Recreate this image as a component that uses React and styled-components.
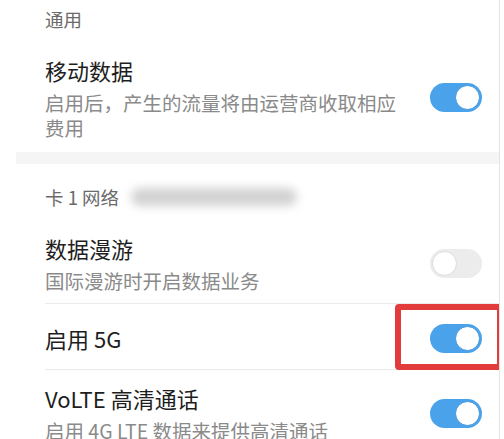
import React from "react";
import styled, { createGlobalStyle } from "styled-components";

const GlobalStyle = createGlobalStyle`
	body {
		margin: 0;
		background: #ffffff;
		font-family: "Noto Sans CJK SC", "Noto Sans", sans-serif;
		-webkit-font-smoothing: antialiased;
	}
`;

const SETTINGS = [
	{
		header: "通用",
		rows: [
			{
				title: "移动数据",
				desc: "启用后，产生的流量将由运营商收取相应费用",
				on: true,
			},
		],
	},
	{
		header: "卡 1 网络",
		blurred: true,
		rows: [
			{ title: "数据漫游", desc: "国际漫游时开启数据业务", on: false, divider: true },
			{ title: "启用 5G", on: true, divider: true, marked: true },
			{ title: "VoLTE 高清通话", desc: "启用 4G LTE 数据来提供高清通话", on: true },
		],
	},
];

const Toggle = ({ on }) => (
	<StyledTrack $on={on}>
		<StyledKnob $on={on} />
	</StyledTrack>
);

const SettingRow = ({ row }) => (
	<StyledRow $divider={row.divider}>
		<StyledText>
			<StyledTitle>{row.title}</StyledTitle>
			{row.desc && <StyledDesc>{row.desc}</StyledDesc>}
		</StyledText>
		<Toggle on={row.on} />
		{row.marked && <StyledMark />}
	</StyledRow>
);

const App = () => {
	return (
		<>
			<GlobalStyle />
			<StyledScreen>
				{SETTINGS.map((section, index) => (
					<React.Fragment key={section.header}>
						{index > 0 && <StyledGap />}
						<StyledCard $first={index === 0}>
							<StyledHeader>
								{section.header}
								{section.blurred && <StyledBlur />}
							</StyledHeader>
							{section.rows.map((row) => (
								<SettingRow key={row.title} row={row} />
							))}
						</StyledCard>
					</React.Fragment>
				))}
			</StyledScreen>
		</>
	);
};

const StyledScreen = styled.div`
	width: 500px;
	height: 439px;
	overflow: hidden;
	box-sizing: border-box;
	padding-left: 16px;
	border-right: 1px solid #e4e4e4;
`;

const StyledGap = styled.div`
	height: 12px;
	background: #f5f5f5;
`;

const StyledCard = styled.div`
	padding: ${({ $first }) => ($first ? "6px 0 2px 29px" : "20px 0 0 29px")};
	background: #ffffff;
`;

const StyledHeader = styled.div`
	display: flex;
	align-items: center;
	height: 26px;
	margin-bottom: 10px;
	font-size: 18.5px;
	line-height: 26px;
	color: #6a6a6a;
`;

const StyledBlur = styled.div`
	width: 166px;
	height: 18px;
	margin-left: 12px;
	border-radius: 9px;
	background: #d2d2d2;
	filter: blur(5px);
`;

const StyledRow = styled.div`
	position: relative;
	display: flex;
	align-items: center;
	min-height: 66px;
	box-sizing: border-box;
	padding: 13px 17px 10px 0;
	border-bottom: 1px solid ${({ $divider }) => ($divider ? "#ebebeb" : "transparent")};
	&:last-child {
		border-bottom: none;
	}
`;

const StyledText = styled.div`
	flex: 1;
	min-width: 0;
	padding-right: 30px;
`;

const StyledTitle = styled.div`
	font-size: 22px;
	line-height: 30px;
	color: #1e1e1e;
`;

const StyledDesc = styled.div`
	margin-top: 5px;
	font-size: 19.5px;
	line-height: 25px;
	color: #8a8a8a;
`;

const StyledTrack = styled.div`
	position: relative;
	flex: 0 0 auto;
	width: 52px;
	height: 29px;
	border-radius: 15px;
	background: ${({ $on }) => ($on ? "#4aa3ea" : "#ececec")};
`;

const StyledKnob = styled.div`
	position: absolute;
	top: 2px;
	left: ${({ $on }) => ($on ? "25px" : "2px")};
	width: 25px;
	height: 25px;
	box-sizing: border-box;
	border-radius: 50%;
	background: #ffffff;
	border: 1px solid ${({ $on }) => ($on ? "#3f95dc" : "#dcdcdc")};
`;

const StyledMark = styled.div`
	position: absolute;
	top: 0;
	bottom: -1px;
	right: -4px;
	width: 108px;
	box-sizing: border-box;
	border: 6px solid #e23b3b;
	border-radius: 4px;
	pointer-events: none;
`;

export default App;
